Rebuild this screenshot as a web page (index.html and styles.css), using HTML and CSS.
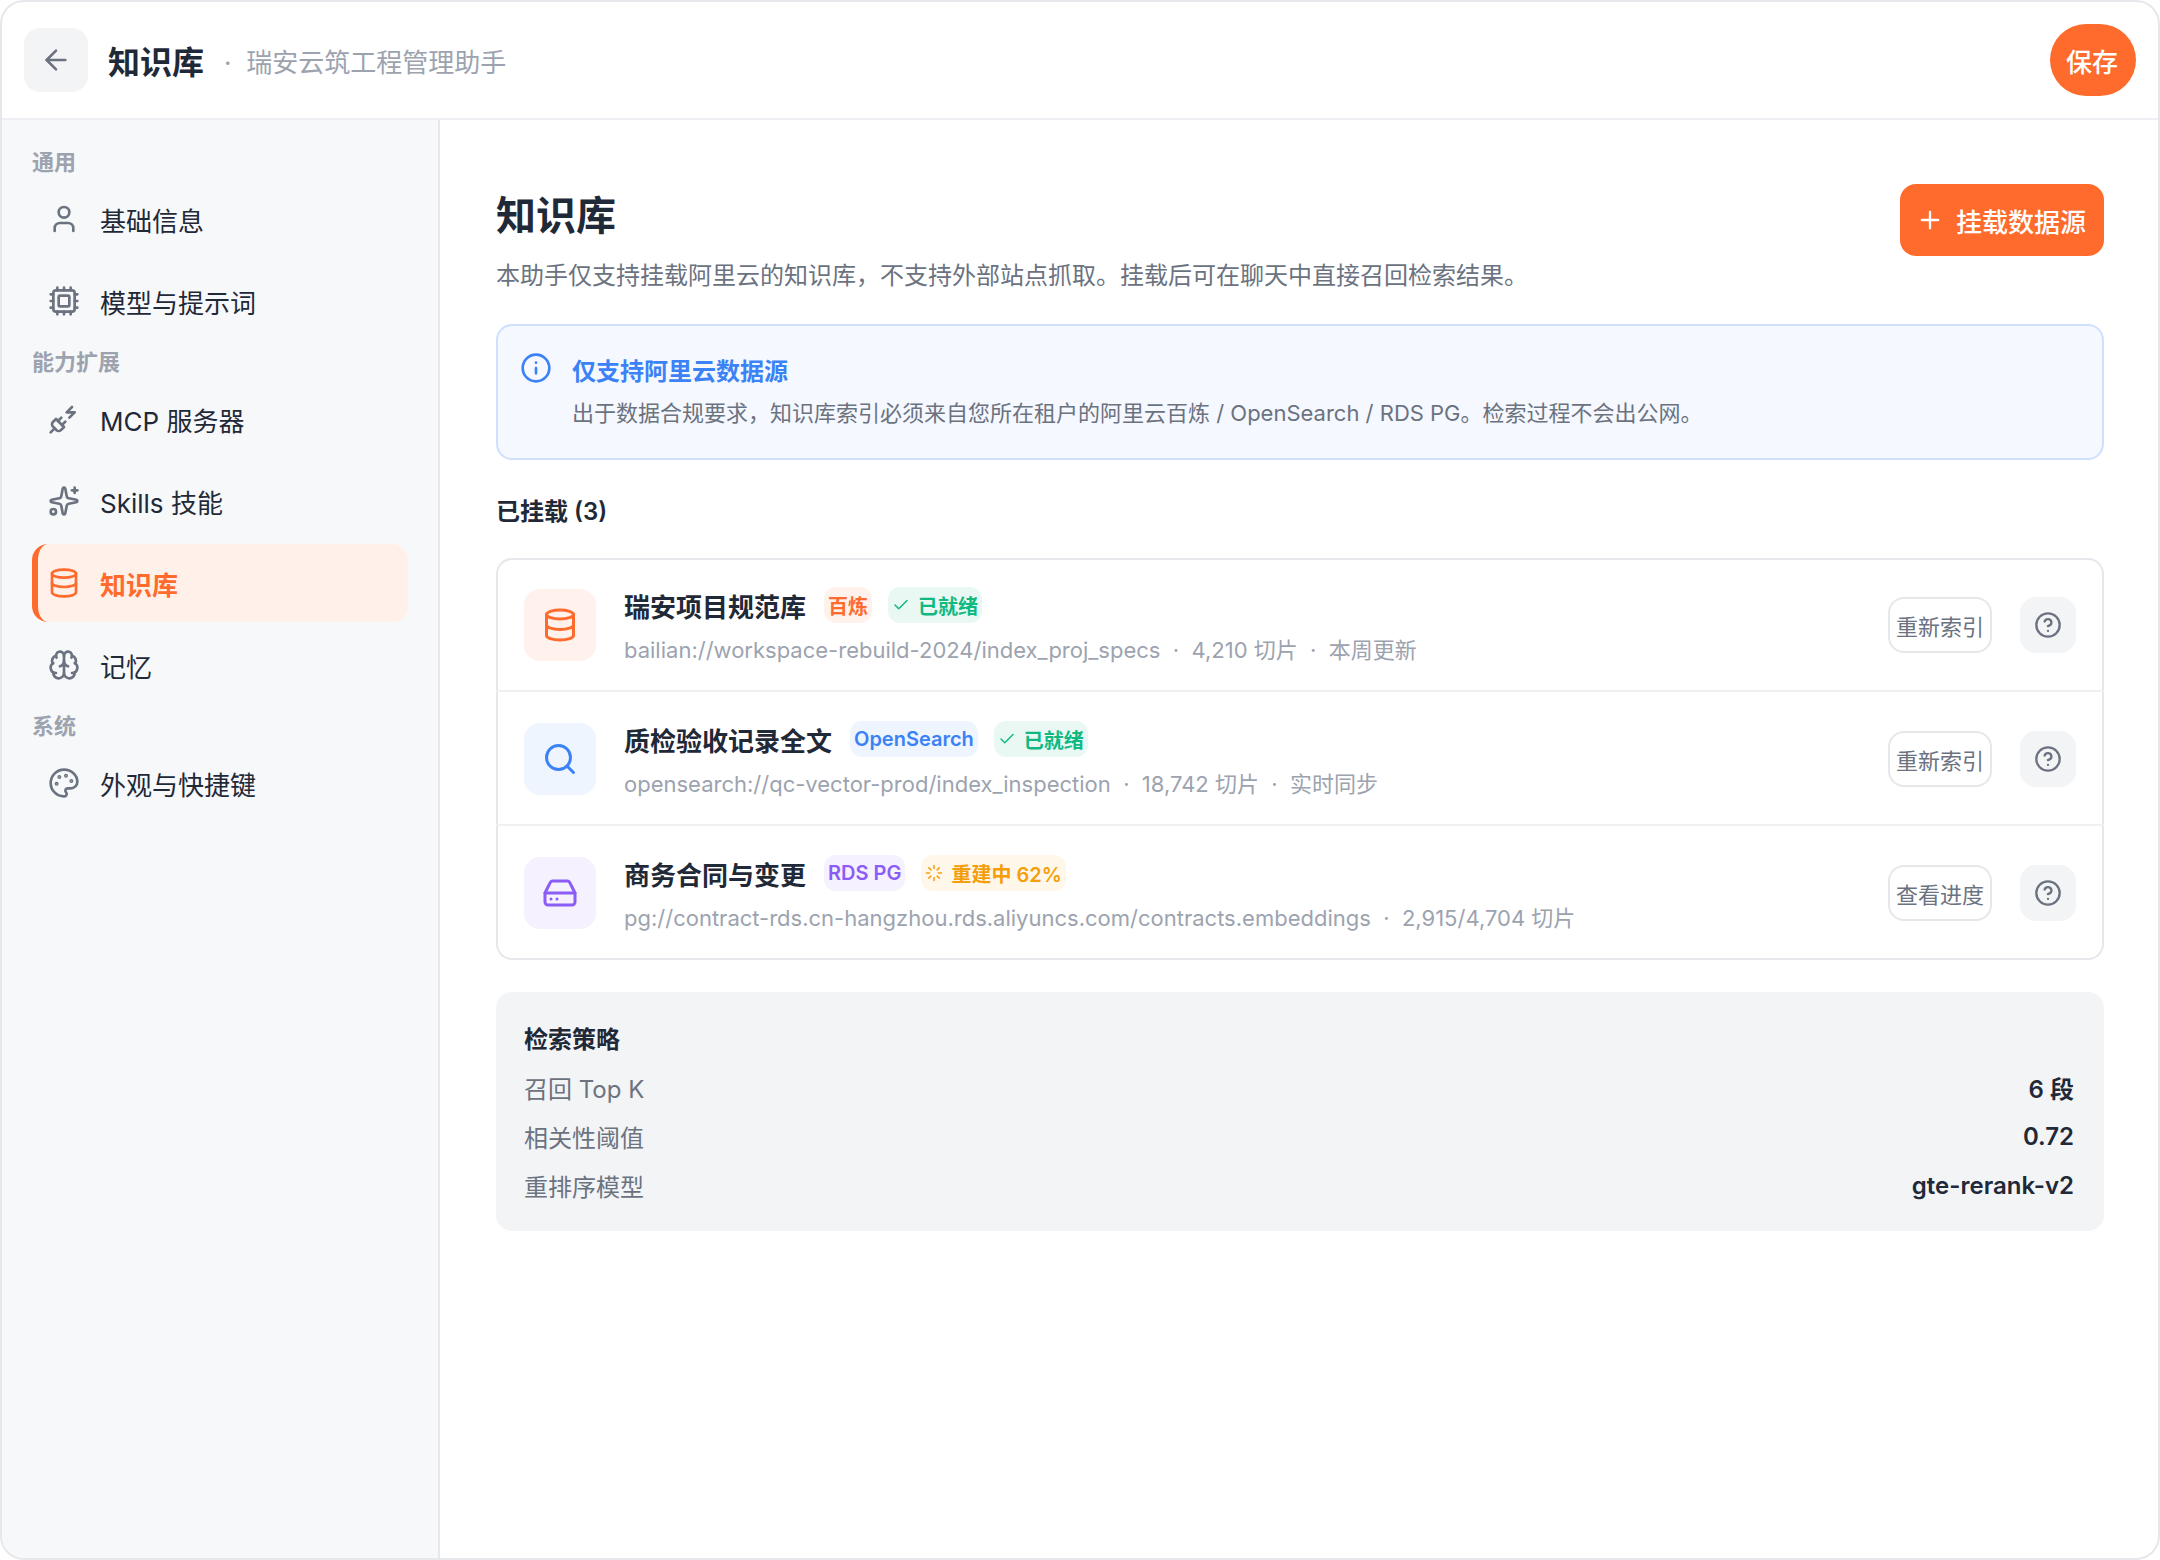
FILE: index.html
```html
<!DOCTYPE html>
<html lang="zh-CN">
<head>
<meta charset="utf-8">
<meta name="viewport" content="width=device-width, initial-scale=1">
<title>知识库</title>
<link rel="stylesheet" href="styles.css">
</head>
<body>
<svg class="sprite" aria-hidden="true">
  <symbol id="i-database" viewBox="0 0 24 24"><ellipse cx="12" cy="5" rx="9" ry="3"/><path d="M3 5v14a9 3 0 0 0 18 0V5"/><path d="M3 12a9 3 0 0 0 18 0"/></symbol>
  <symbol id="i-check" viewBox="0 0 24 24"><path d="M20 6 9 17l-5-5"/></symbol>
  <symbol id="i-help" viewBox="0 0 24 24"><circle cx="12" cy="12" r="10"/><path d="M9.09 9a3 3 0 0 1 5.83 1c0 2-3 3-3 3"/><path d="M12 17h.01"/></symbol>
</svg>
<div class="window">
  <header class="topbar">
    <button class="back" type="button" aria-label="返回"><svg class="icon icon-md" viewBox="0 0 24 24"><path d="m12 19-7-7 7-7"/><path d="M19 12H5"/></svg></button>
    <strong class="topbar-title">知识库</strong>
    <span class="topbar-sub">·&nbsp; 瑞安云筑工程管理助手</span>
    <button class="save" type="button">保存</button>
  </header>
  <div class="body">
    <nav class="sidebar">
      <div class="nav-label">通用</div>
      <a class="nav-item" href="#"><svg class="icon icon-md" viewBox="0 0 24 24"><path d="M19 21v-2a4 4 0 0 0-4-4H9a4 4 0 0 0-4 4v2"/><circle cx="12" cy="7" r="4"/></svg>基础信息</a>
      <a class="nav-item" href="#"><svg class="icon icon-md" viewBox="0 0 24 24"><path d="M12 20v2M12 2v2M17 20v2M17 2v2M2 12h2M2 17h2M2 7h2M20 12h2M20 17h2M20 7h2M7 20v2M7 2v2"/><rect x="4" y="4" width="16" height="16" rx="2"/><rect x="8" y="8" width="8" height="8" rx="1"/></svg>模型与提示词</a>
      <div class="nav-label">能力扩展</div>
      <a class="nav-item" href="#"><svg class="icon icon-md" viewBox="0 0 24 24"><path d="M6.3 20.3a2.4 2.4 0 0 0 3.4 0L12 18l-6-6-2.3 2.3a2.4 2.4 0 0 0 0 3.4Z"/><path d="m2 22 3-3"/><path d="M7.5 13.5 10 11"/><path d="M10.500 16.500 13 14"/><path d="m18 3-4 4h6l-4 4"/></svg>MCP 服务器</a>
      <a class="nav-item" href="#"><svg class="icon icon-md" viewBox="0 0 24 24"><path d="M11.017 2.814a1 1 0 0 1 1.966 0l1.051 5.558a2 2 0 0 0 1.594 1.594l5.558 1.051a1 1 0 0 1 0 1.966l-5.558 1.051a2 2 0 0 0-1.594 1.594l-1.051 5.558a1 1 0 0 1-1.966 0l-1.051-5.558a2 2 0 0 0-1.594-1.594l-5.558-1.051a1 1 0 0 1 0-1.966l5.558-1.051a2 2 0 0 0 1.594-1.594z"/><path d="M20 2v4"/><path d="M22 4h-4"/><circle cx="4" cy="20" r="2"/></svg>Skills 技能</a>
      <a class="nav-item active" href="#" aria-current="page"><svg class="icon icon-md"><use href="#i-database"/></svg>知识库</a>
      <a class="nav-item" href="#"><svg class="icon icon-md" viewBox="0 0 24 24"><path d="M12 18V5"/><path d="M15 13a4.170 4.170 0 0 1-3-4 4.170 4.170 0 0 1-3 4"/><path d="M17.598 6.500A3 3 0 1 0 12 5a3 3 0 1 0-5.598 1.500"/><path d="M17.997 5.125a4 4 0 0 1 2.526 5.770"/><path d="M18 18a4 4 0 0 0 2-7.464"/><path d="M19.967 17.483A4 4 0 1 1 12 18a4 4 0 1 1-7.967-.517"/><path d="M6 18a4 4 0 0 1-2-7.464"/><path d="M6.003 5.125a4 4 0 0 0-2.526 5.770"/></svg>记忆</a>
      <div class="nav-label">系统</div>
      <a class="nav-item" href="#"><svg class="icon icon-md" viewBox="0 0 24 24"><path d="M12 22a1 1 0 0 1 0-20 10 9 0 0 1 10 9 5 5 0 0 1-5 5h-2.250a1.750 1.750 0 0 0-1.400 2.800l.3.400a1.750 1.750 0 0 1-1.400 2.800z"/><g fill="currentColor"><circle cx="13.500" cy="6.500" r=".5"/><circle cx="17.500" cy="10.500" r=".5"/><circle cx="6.500" cy="12.500" r=".5"/><circle cx="8.500" cy="7.500" r=".5"/></g></svg>外观与快捷键</a>
    </nav>
    <main class="main">
      <section class="page-head">
        <div class="page-copy">
          <h1>知识库</h1>
          <p>本助手仅支持挂载阿里云的知识库，不支持外部站点抓取。挂载后可在聊天中直接召回检索结果。</p>
        </div>
        <button class="mount" type="button"><svg class="icon icon-sm" viewBox="0 0 24 24"><path d="M5 12h14M12 5v14"/></svg>挂载数据源</button>
      </section>

      <section class="notice">
        <svg class="icon icon-md" viewBox="0 0 24 24"><circle cx="12" cy="12" r="10"/><path d="M12 16v-4M12 8h.01"/></svg>
        <div>
          <h2>仅支持阿里云数据源</h2>
          <p>出于数据合规要求，知识库索引必须来自您所在租户的阿里云百炼 / OpenSearch / RDS PG。检索过程不会出公网。</p>
        </div>
      </section>

      <h2 class="list-title">已挂载 (3)</h2>

      <ul class="sources">
        <li class="source">
          <span class="tile orange"><svg class="icon icon-lg"><use href="#i-database"/></svg></span>
          <div class="source-copy">
            <div class="source-head"><h3>瑞安项目规范库</h3><span class="badge orange">百炼</span><span class="badge green"><svg class="icon icon-xs"><use href="#i-check"/></svg>已就绪</span></div>
            <p>bailian://workspace-rebuild-2024/index_proj_specs &nbsp;·&nbsp; 4,210 切片 &nbsp;·&nbsp; 本周更新</p>
          </div>
          <button class="outline" type="button">重新索引</button>
          <button class="help" type="button" aria-label="帮助"><svg class="icon icon-sm"><use href="#i-help"/></svg></button>
        </li>
        <li class="source">
          <span class="tile blue"><svg class="icon icon-lg" viewBox="0 0 24 24"><circle cx="11" cy="11" r="8"/><path d="m21 21-4.340-4.340"/></svg></span>
          <div class="source-copy">
            <div class="source-head"><h3>质检验收记录全文</h3><span class="badge blue">OpenSearch</span><span class="badge green"><svg class="icon icon-xs"><use href="#i-check"/></svg>已就绪</span></div>
            <p>opensearch://qc-vector-prod/index_inspection &nbsp;·&nbsp; 18,742 切片 &nbsp;·&nbsp; 实时同步</p>
          </div>
          <button class="outline" type="button">重新索引</button>
          <button class="help" type="button" aria-label="帮助"><svg class="icon icon-sm"><use href="#i-help"/></svg></button>
        </li>
        <li class="source">
          <span class="tile purple"><svg class="icon icon-lg" viewBox="0 0 24 24"><path d="M22 12H2"/><path d="M5.450 5.110 2 12v6a2 2 0 0 0 2 2h16a2 2 0 0 0 2-2v-6l-3.450-6.890A2 2 0 0 0 16.760 4H7.240a2 2 0 0 0-1.790 1.110z"/><path d="M6 16h.01M10 16h.01"/></svg></span>
          <div class="source-copy">
            <div class="source-head"><h3>商务合同与变更</h3><span class="badge purple">RDS PG</span><span class="badge amber"><svg class="icon icon-xs" viewBox="0 0 24 24"><path d="M12 2v4M16.200 7.800l2.900-2.900M18 12h4M16.200 16.200l2.900 2.900M12 18v4M4.900 19.100l2.900-2.900M2 12h4M4.900 4.900l2.900 2.900"/></svg>重建中 62%</span></div>
            <p>pg://contract-rds.cn-hangzhou.rds.aliyuncs.com/contracts.embeddings &nbsp;·&nbsp; 2,915/4,704 切片</p>
          </div>
          <button class="outline" type="button">查看进度</button>
          <button class="help" type="button" aria-label="帮助"><svg class="icon icon-sm"><use href="#i-help"/></svg></button>
        </li>
      </ul>

      <section class="strategy">
        <h2>检索策略</h2>
        <dl>
          <div><dt>召回 Top K</dt><dd>6 段</dd></div>
          <div><dt>相关性阈值</dt><dd>0.72</dd></div>
          <div><dt>重排序模型</dt><dd>gte-rerank-v2</dd></div>
        </dl>
      </section>
    </main>
  </div>
</div>
</body>
</html>
```
FILE: styles.css
```css
:root {
  --ink: #1f2937;
  --muted: #6b7280;
  --faint: #9ca3af;
  --line: #e5e7eb;
  --soft: #f3f4f6;
  --orange: #ff6b2c;
}

* { box-sizing: border-box; }

body {
  margin: 0;
  background: #fff;
  color: var(--ink);
  font: 400 24px Inter, "Noto Sans CJK SC", sans-serif;
}

h1, h2, h3, p, ul, dl, dd { margin: 0; padding: 0; }
h2 { font-size: 24px; font-weight: 600; }
button { border: 0; padding: 0; font: inherit; cursor: pointer; }

.sprite { display: none; }

.icon {
  flex: none;
  fill: none;
  stroke: currentColor;
  stroke-width: 2;
  stroke-linecap: round;
  stroke-linejoin: round;
}
.icon-xs { width: 18px; height: 18px; }
.icon-sm { width: 28px; height: 28px; }
.icon-md { width: 32px; height: 32px; }
.icon-lg { width: 36px; height: 36px; }

.window {
  display: flex;
  flex-direction: column;
  min-height: 100vh;
  overflow: hidden;
  border: 2px solid var(--line);
  border-radius: 24px;
}

/* Top bar */
.topbar {
  display: flex;
  align-items: center;
  gap: 20px;
  padding: 22px;
  border-bottom: 2px solid #eeeff2;
}
.back {
  display: grid;
  place-items: center;
  width: 64px;
  height: 64px;
  border-radius: 16px;
  background: var(--soft);
  color: var(--muted);
}
.topbar-title { font-size: 32px; font-weight: 600; }
.topbar-sub { color: var(--faint); font-size: 26px; }
.save {
  height: 72px;
  margin-left: auto;
  padding: 0 18px 0 16px;
  border-radius: 36px;
  background: var(--orange);
  color: #fff;
  font-size: 26px;
  font-weight: 500;
}

.body { display: flex; flex: 1; }

/* Sidebar */
.sidebar {
  display: flex;
  flex: none;
  flex-direction: column;
  gap: 4px;
  width: 438px;
  padding: 24px 30px;
  border-right: 2px solid var(--line);
  background: #f7f8fa;
}
.nav-label { color: var(--faint); font-size: 22px; font-weight: 600; }
.nav-item {
  display: flex;
  align-items: center;
  gap: 20px;
  height: 78px;
  padding: 0 10px;
  border-left: 6px solid transparent;
  border-radius: 16px;
  color: var(--ink);
  font-size: 26px;
  text-decoration: none;
}
.nav-item .icon { color: var(--muted); }
.nav-item.active {
  border-left-color: var(--orange);
  background: #fff1ea;
  color: var(--orange);
  font-weight: 600;
}
.nav-item.active .icon { color: inherit; }

/* Main column */
.main {
  display: flex;
  flex: 1;
  flex-direction: column;
  gap: 32px;
  min-width: 0;
  padding: 64px 54px 64px 56px;
}
.page-head {
  display: flex;
  align-items: flex-start;
  justify-content: space-between;
  gap: 32px;
  min-height: 108px;
}
.page-copy { display: flex; flex-direction: column; gap: 14px; }
.page-copy h1 { font-size: 40px; font-weight: 600; }
.page-copy p { color: var(--muted); }
.mount {
  display: flex;
  flex: none;
  align-items: center;
  gap: 12px;
  height: 72px;
  padding: 0 18px 0 16px;
  border-radius: 16px;
  background: var(--orange);
  color: #fff;
  font-size: 26px;
  font-weight: 500;
}

.notice {
  display: flex;
  align-items: flex-start;
  gap: 20px;
  min-height: 136px;
  padding: 26px 22px;
  border: 2px solid #cfe0fe;
  border-radius: 16px;
  background: #f5f8ff;
  color: #3b82f6;
}
.notice p { margin-top: 8px; color: var(--muted); font-size: 22px; }

/* Mounted sources */
.list-title { height: 34px; }
.sources {
  border-radius: 16px;
  box-shadow: inset 0 0 0 2px var(--line);
  list-style: none;
}
.source {
  display: flex;
  align-items: center;
  gap: 28px;
  height: 134px;
  padding: 0 28px;
}
.source:not(:last-child) { box-shadow: inset 0 -2px #f0f0f2; }
.tile {
  display: grid;
  flex: none;
  place-items: center;
  width: 72px;
  height: 72px;
  border-radius: 16px;
}
.source-copy { display: flex; flex: 1; flex-direction: column; gap: 8px; min-width: 0; }
.source-head { display: flex; align-items: center; gap: 16px; }
.source-head h3 { margin-right: 2px; font-size: 26px; font-weight: 600; }
.source-copy p { color: var(--faint); font-size: 22px; }
.badge {
  display: flex;
  align-items: center;
  gap: 8px;
  height: 36px;
  padding: 0 4px;
  border-radius: 12px;
  font-size: 20px;
  font-weight: 600;
}
.orange { background: #fff2ec; color: var(--orange); }
.blue { background: #eef5ff; color: #3b82f6; }
.purple { background: #f5f1fe; color: #8b5cf6; }
.green { background: #e9f8f3; color: #10b981; }
.amber { background: #fff7ea; color: #f59e0b; }

.outline {
  height: 56px;
  padding: 0 6px;
  border: 2px solid var(--line);
  border-radius: 16px;
  background: #fff;
  color: var(--muted);
  font-size: 22px;
}
.help {
  display: grid;
  place-items: center;
  width: 56px;
  height: 56px;
  border-radius: 16px;
  background: var(--soft);
  color: var(--muted);
}

/* Retrieval strategy */
.strategy { padding: 28px 30px 28px 28px; border-radius: 16px; background: var(--soft); }
.strategy dl { display: flex; flex-direction: column; gap: 14px; margin-top: 15px; }
.strategy dl div { display: flex; align-items: center; justify-content: space-between; }
.strategy dt { color: var(--muted); }
.strategy dd { font-weight: 600; }
```
